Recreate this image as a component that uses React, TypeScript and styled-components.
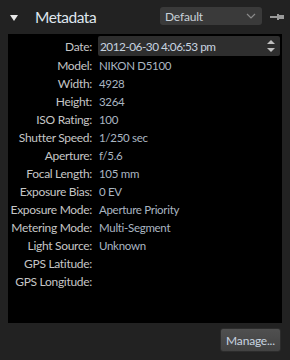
import { FC } from "react";
import styled, { createGlobalStyle } from "styled-components";

const Global = createGlobalStyle`
  html, body {
    margin: 0;
    background: #222222;
  }
  body {
    font-family: Lato, "Noto Sans", sans-serif;
  }
`;

const Panel = styled.div`
  width: 290px;
  height: 360px;
  background: #222222;
  display: flex;
  flex-direction: column;
  box-sizing: border-box;
`;

const Header = styled.div`
  display: flex;
  align-items: center;
  height: 34px;
  padding: 0 6px 0 10px;
`;

const Triangle = styled.span`
  width: 0;
  height: 0;
  border-left: 4px solid transparent;
  border-right: 4px solid transparent;
  border-top: 6px solid #e8e8e8;
  margin-top: 1px;
`;

const Title = styled.h2`
  margin: 0 0 0 17px;
  font-size: 15.5px;
  letter-spacing: -0.5px;
  font-weight: 400;
  color: #dfe6ee;
  flex: 1;
`;

const Select = styled.div`
  width: 102px;
  height: 18px;
  margin-top: -2px;
  box-sizing: border-box;
  background: #3a3a3a;
  border-radius: 3px;
  display: flex;
  align-items: center;
  justify-content: space-between;
  padding: 0 6px 0 5px;
  font-size: 12px;
  letter-spacing: -0.2px;
  color: #c8d0d8;
`;

const Content = styled.div`
  margin: 0 8px;
  height: 289px;
  background: #000000;
  padding: 2px 2px 0 0;
  box-sizing: border-box;
`;

const Row = styled.div`
  display: grid;
  grid-template-columns: 84px 1fr;
  column-gap: 7px;
  align-items: center;
  height: 18px;
  font-size: 12px;
  letter-spacing: -0.3px;
`;

const Label = styled.span`
  display: flex;
  justify-content: flex-end;
  color: #c6c6c6;
  white-space: nowrap;
`;

const Value = styled.span`
  color: #aab6c2;
  font-size: 11.5px;
  white-space: nowrap;
`;

const DateRow = styled(Row)`
  height: 20px;
  column-gap: 6px;
`;

const DateInput = styled.div`
  height: 20px;
  background: #2e2e2e;
  border-radius: 2px;
  display: flex;
  align-items: center;
  justify-content: space-between;
  padding: 0 4px 0 2px;
  font-size: 11.8px;
  letter-spacing: -0.5px;
  color: #c8d4e0;
`;

const Footer = styled.div`
  flex: 1;
  display: flex;
  justify-content: flex-end;
  align-items: flex-start;
  padding: 5px 9px 0 0;
`;

const Button = styled.button`
  width: 61px;
  height: 24px;
  border: 1px solid #2c2c2c;
  border-radius: 3px;
  background: linear-gradient(#505050, #424242);
  color: #c8d4e0;
  font-family: inherit;
  font-size: 12px;
  letter-spacing: -0.2px;
  padding: 0;
`;

const fields: [string, string][] = [
  ["Model", "NIKON D5100"],
  ["Width", "4928"],
  ["Height", "3264"],
  ["ISO Rating", "100"],
  ["Shutter Speed", "1/250 sec"],
  ["Aperture", "f/5.6"],
  ["Focal Length", "105 mm"],
  ["Exposure Bias", "0 EV"],
  ["Exposure Mode", "Aperture Priority"],
  ["Metering Mode", "Multi-Segment"],
  ["Light Source", "Unknown"],
  ["GPS Latitude", ""],
  ["GPS Longitude", ""],
];

const Chevron: FC = () => (
  <svg width="10" height="6" viewBox="0 0 10 6">
    <path d="M1 1l4 4 4-4" fill="none" stroke="#8a8a8a" strokeWidth="1.2" />
  </svg>
);

const Pin: FC = () => (
  <svg width="14" height="8" viewBox="0 0 14 8" style={{ marginLeft: 8 }}>
    <rect x="0" y="3" width="7" height="2" fill="#9a9a9a" />
    <rect x="7" y="1" width="2" height="6" fill="#9a9a9a" />
    <rect x="9" y="2" width="5" height="4" fill="#9a9a9a" />
  </svg>
);

const Spinner: FC = () => (
  <svg width="10" height="16" viewBox="0 0 10 16">
    <path d="M1 6l4-4 4 4z" fill="#c0c0c0" />
    <path d="M1 10l4 4 4-4z" fill="#c0c0c0" />
  </svg>
);

export default function App() {
  return (
    <Panel>
      <Global />
      <Header>
        <Triangle />
        <Title>Metadata</Title>
        <Select>
          <span>Default</span>
          <Chevron />
        </Select>
        <Pin />
      </Header>
      <Content>
        <DateRow>
          <Label>Date:</Label>
          <DateInput>
            <span>2012-06-30 4:06:53 pm</span>
            <Spinner />
          </DateInput>
        </DateRow>
        {fields.map(([k, v]) => (
          <Row key={k}>
            <Label>{k}:</Label>
            <Value>{v}</Value>
          </Row>
        ))}
      </Content>
      <Footer>
        <Button>Manage...</Button>
      </Footer>
    </Panel>
  );
}
